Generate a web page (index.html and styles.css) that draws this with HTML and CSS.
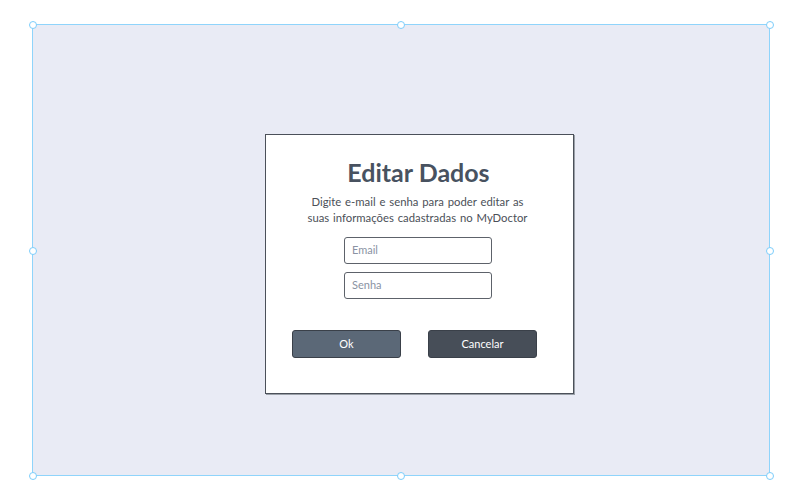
FILE: index.html
```html
<!DOCTYPE html>
<html>
<head>
<meta charset="utf-8">
<link rel="stylesheet" href="styles.css">
</head>
<body>
<div class="canvas">
  <span class="handle h-tl"></span>
  <span class="handle h-tm"></span>
  <span class="handle h-tr"></span>
  <span class="handle h-ml"></span>
  <span class="handle h-mr"></span>
  <span class="handle h-bl"></span>
  <span class="handle h-bm"></span>
  <span class="handle h-br"></span>
  <div class="dialog">
    <h1 class="title">Editar Dados</h1>
    <p class="subtitle">Digite e-mail e senha para poder editar as<br>suas informações cadastradas no MyDoctor</p>
    <div class="fields">
      <div class="field">Email</div>
      <div class="field">Senha</div>
    </div>
    <div class="actions">
      <div class="btn btn-ok">Ok</div>
      <div class="btn btn-cancel">Cancelar</div>
    </div>
  </div>
</div>
</body>
</html>
```
FILE: styles.css
```css
html, body {
  margin: 0;
  padding: 0;
  background: #ffffff;
  width: 800px;
  height: 497px;
  overflow: hidden;
  font-family: Lato, "Noto Sans", sans-serif;
}
.canvas {
  position: relative;
  box-sizing: border-box;
  margin: 24px 0 0 32px;
  width: 738px;
  height: 452px;
  border: 1px solid #8fd4fb;
  background: #e9ebf5;
  padding: 109px 0 0 232px;
}
.handle {
  position: absolute;
  width: 8px;
  height: 8px;
  box-sizing: border-box;
  border: 1.5px solid #7ccdfb;
  border-radius: 50%;
  background: #ffffff;
}
.h-tl { left: -4.5px; top: -4.5px; }
.h-tm { left: 364px; top: -4.5px; }
.h-tr { right: -4.5px; top: -4.5px; }
.h-ml { left: -4.5px; top: 221.5px; }
.h-mr { right: -4.5px; top: 221.5px; }
.h-bl { left: -4.5px; bottom: -4.5px; }
.h-bm { left: 364px; bottom: -4.5px; }
.h-br { right: -4.5px; bottom: -4.5px; }
.dialog {
  box-sizing: border-box;
  width: 309px;
  height: 260px;
  background: #ffffff;
  border: 1px solid #4b5059;
  box-shadow: 1px 1px 0 #9aa0a8;
  display: flex;
  flex-direction: column;
  align-items: center;
  padding-top: 22px;
}
.title {
  margin: 0 2px 0 0;
  font-size: 25px;
  font-weight: 700;
  line-height: 30px;
  color: #485260;
}
.subtitle {
  margin: 7px 4px 0 0;
  font-size: 11.3px;
  line-height: 16px;
  word-spacing: 1px;
  color: #4b5058;
  text-align: center;
}
.fields {
  margin: 11px 3px 0 0;
  display: flex;
  flex-direction: column;
  gap: 8px;
}
.field {
  box-sizing: border-box;
  width: 148px;
  height: 27px;
  border: 1.5px solid #5d626a;
  border-radius: 3px;
  padding-left: 7px;
  font-size: 11px;
  line-height: 24px;
  color: #8a93a3;
}
.actions {
  margin: 31px 10px 0 0;
  display: flex;
  gap: 27px;
}
.btn {
  box-sizing: border-box;
  width: 109px;
  height: 28px;
  border-radius: 3px;
  border: 1.5px solid #3a4049;
  color: #ffffff;
  font-size: 11px;
  font-weight: 400;
  line-height: 25px;
  text-align: center;
}
.btn-ok { background: #5b6877; }
.btn-cancel { background: #474e58; }
```
